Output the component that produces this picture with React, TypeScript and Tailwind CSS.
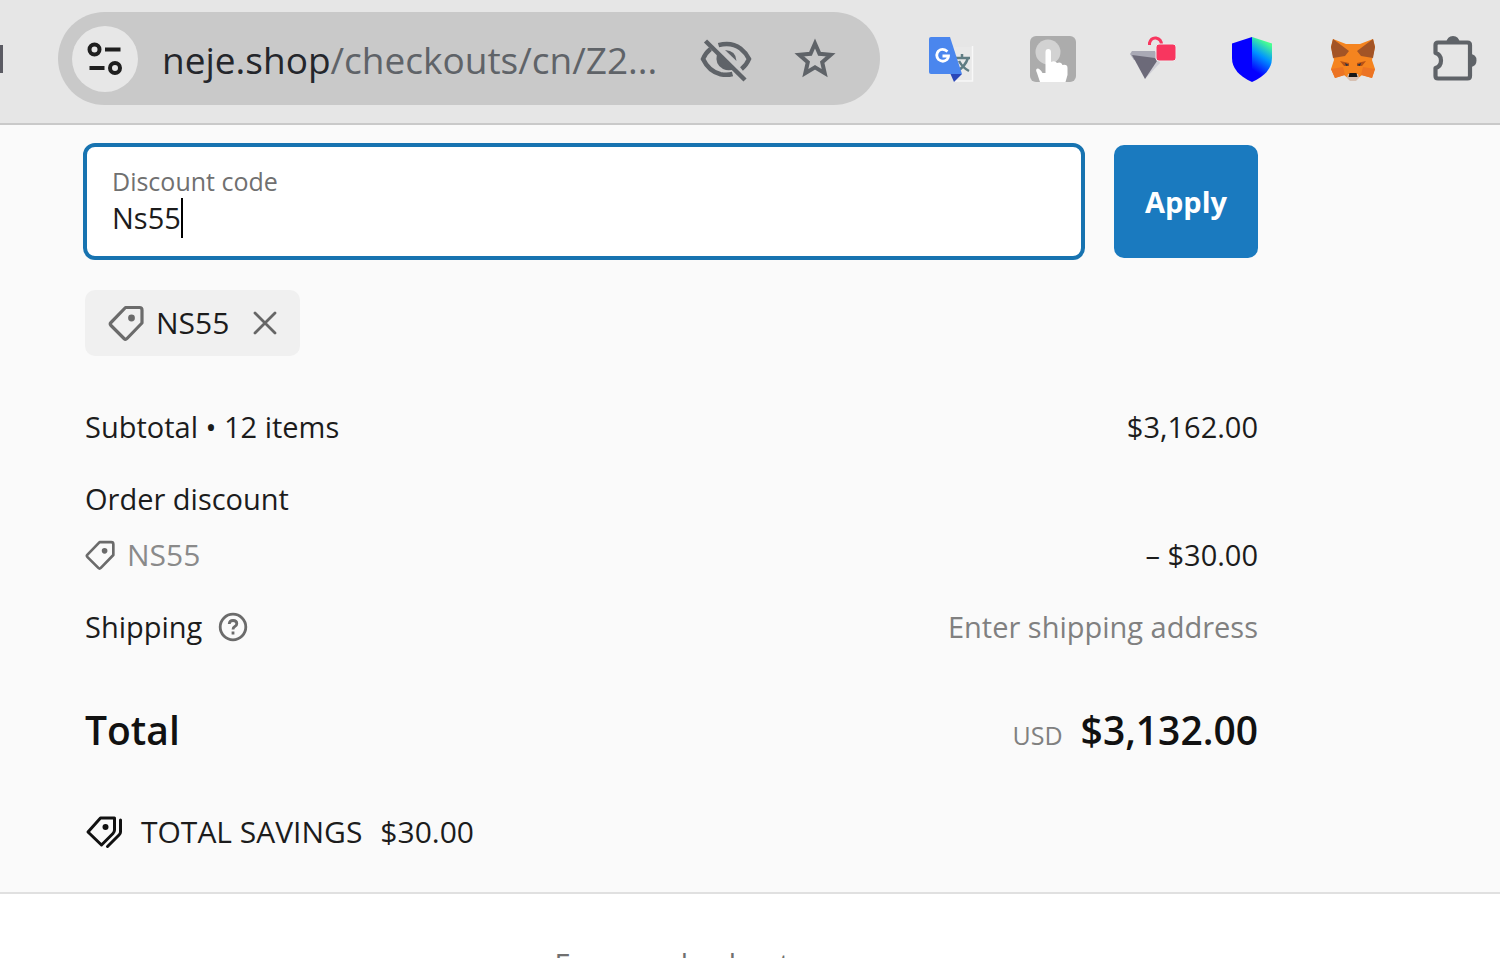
import type { ReactNode } from 'react'

function TagIcon({ className }: { className: string }) {
  return (
    <svg viewBox="0 0 36 36" fill="none" stroke="#6b6b6b" strokeWidth="3.2" strokeLinejoin="round" className={className} aria-hidden="true">
      <path d="M17.5 2.5 H31.5 Q34 2.5 34 5 V18 L19 33.5 Q17.5 35 16 33.5 L3 20.5 Q1.5 19 3 17.5 Z" />
      <circle cx="23.5" cy="13" r="3.4" fill="#6b6b6b" stroke="none" />
    </svg>
  )
}

function SavingsIcon() {
  return (
    <svg viewBox="0 0 38 34" fill="none" stroke="#111" strokeWidth="3" strokeLinejoin="round" strokeLinecap="round" className="w-[38px] h-[34px] shrink-0" aria-hidden="true">
      <path d="M15.5 3 H29.5 V15 Q29.5 17 28 18.5 L16.5 30 L3 17 Z" />
      <circle cx="20.5" cy="12" r="3" fill="#111" stroke="none" />
      <path d="M35.5 5 V17 Q35.5 18.5 34 20 L22.5 31.5" />
    </svg>
  )
}

function TuneIcon() {
  return (
    <svg viewBox="0 0 36 34" fill="none" stroke="#1f1f1f" strokeWidth="4" className="w-9 h-[34px]" aria-hidden="true">
      <circle cx="7.5" cy="7.5" r="5" />
      <path d="M18 7.5 H33.5 M2.5 26 H17.5" />
      <circle cx="28" cy="26" r="5" />
    </svg>
  )
}

function EyeOffIcon() {
  return (
    <svg viewBox="0 0 52 44" fill="none" stroke="#5f6368" strokeWidth="4.5" className="w-[52px] h-[44px]" aria-hidden="true">
      <path d="M18.5 6.2 Q31 2.5 40.5 9.5 Q46 13.8 49 20 Q46.5 26 41.5 30" />
      <path d="M10.5 10 Q5.5 14 3 20 Q9 32.5 20.5 35.2 Q27 36.5 32.5 35" />
      <path d="M17 15 L34 30 Q29 32.5 23 30 Q14.5 25.5 17 15 Z" fill="#5f6368" stroke="none" />
      <path d="M25 11 Q36 11.5 36.5 22 L25 11 Z" fill="#5f6368" stroke="none" />
      <path d="M5.5 2 L45 41" />
    </svg>
  )
}

function StarIcon() {
  return (
    <svg viewBox="0 0 44 42" fill="none" stroke="#5f6368" strokeWidth="4" strokeLinejoin="miter" className="w-[44px] h-[42px]" aria-hidden="true">
      <path d="M22 5.5 L26.5 15.8 L37.7 16.8 L29.2 24.2 L31.7 35.2 L22 29.4 L12.3 35.2 L14.8 24.2 L6.3 16.8 L17.5 15.8 Z" />
    </svg>
  )
}

function TranslateIcon() {
  return (
    <svg viewBox="3 0 48 48" className="size-12" aria-hidden="true">
      <path d="M23 11 H45 Q46.5 11 46.5 12.5 V45 H28 Z" fill="#e9e9e9" />
      <path d="M46.5 10 V45 H28" fill="none" stroke="#f8f8f8" strokeWidth="1.5" />
      <path d="M28 22 H44 M36 18 V22 M42 22 Q39 31 31 35 M33 25 Q37 32 43 35" fill="none" stroke="#607d83" strokeWidth="2.5" />
      <path d="M24.5 38 H36 L28 46 Z" fill="#2a47b8" />
      <path d="M5 1 H24 L36 38 H5 Q3 38 3 36 V3 Q3 1 5 1 Z" fill="#4a86ee" />
      <path d="M21.5 15.5 Q16.5 11.5 12.5 15 Q9 19 12.5 23.5 Q17 27 21 23.5 Q22.5 22 22.5 20 H16.5" fill="none" stroke="#fff" strokeWidth="2.8" />
    </svg>
  )
}

function PointerIcon() {
  return (
    <svg viewBox="0 0 48 48" className="size-12" aria-hidden="true">
      <rect x="1" y="0" width="46" height="46" rx="6" fill="#acacac" />
      <circle cx="19" cy="16" r="12.5" fill="#d2d2d2" />
      <path d="M16.5 16 Q16.5 13 19.2 13 Q22 13 22 16 V26 Q26 24 28 27 Q32 25.5 33.5 29 Q38.5 28 38.5 32 V39 L36.5 46 H11 L8 37 Q6 33 8.5 32.5 Q11 32.5 13.5 37 L16.5 37 Z" fill="#fff" />
    </svg>
  )
}

function LockPrismIcon() {
  return (
    <svg viewBox="0 0 48 48" className="size-12" aria-hidden="true">
      <path d="M25 15 L31 27 L16 43 Z" fill="#cfcfd6" />
      <path d="M3 15 H26 L29 20 L26 24 H5 L1 18 Z" fill="#a9a9b5" />
      <path d="M3 19 L26 22 L28 25 L16 43 Z" fill="#6c6a79" />
      <path d="M20.5 9 V7 Q22 1.5 27 2 Q32.5 3 32.5 9" fill="none" stroke="#f8365f" strokeWidth="3" />
      <rect x="27" y="8" width="20" height="17" rx="3" fill="#f8365f" stroke="#ececec" strokeWidth="1" />
    </svg>
  )
}

function ShieldIcon() {
  return (
    <svg viewBox="1 0 48 48" className="size-12" aria-hidden="true">
      <defs>
        <linearGradient id="shield" x1="0.7" y1="0" x2="0.4" y2="1">
          <stop offset="0.1" stopColor="#48ff91" />
          <stop offset="0.45" stopColor="#0094ff" />
          <stop offset="0.85" stopColor="#0500ff" />
        </linearGradient>
      </defs>
      <path d="M24 1 L4 7.5 V22 Q4 37 24 46 Z" fill="#0500ff" />
      <path d="M24 1 L44 7.5 V22 Q44 37 24 46 Z" fill="url(#shield)" />
    </svg>
  )
}

function FoxIcon() {
  return (
    <svg viewBox="0 0 48 48" className="size-12" aria-hidden="true">
      <path d="M4 3 L17 8 H31 L44 3 L46 11 L43 24 L46 33 L43 42 L33 39 L28 43 H20 L15 39 L6 42 L2 33 L5 24 L2 11 Z" fill="#f5841f" />
      <path d="M4 3 L20 15 L16 20 L4 22 L2 11 Z M44 3 L28 15 L32 20 L44 22 L46 11 Z" fill="#a35426" />
      <path d="M2 33 L14 31 L16 39 L6 42 Z M46 33 L34 31 L32 39 L43 42 Z" fill="#ec7424" />
      <path d="M11 25 L20 27 V30 L15 30 Z M37 25 L28 27 V30 L33 30 Z" fill="#b65116" />
      <path d="M16 27 L20 29 L17 30 Z M32 27 L28 29 L31 30 Z" fill="#233447" />
      <path d="M19 38 H29 L30 42 L27 45 H21 L18 42 Z" fill="#d7c1b3" />
      <path d="M20.5 37 H27.5 L28.5 41 H19.5 Z" fill="#161616" />
    </svg>
  )
}

function PuzzleIcon() {
  return (
    <svg viewBox="-2 1 48 48" className="size-12" aria-hidden="true">
      <path d="M7 7.5 H36.5 Q39 7.5 39 10 V41 Q39 43.5 36.5 43.5 H7 Q4.5 43.5 4.5 41 V33 Q10 31.5 10 25.5 Q10 19.5 4.5 18 V10 Q4.5 7.5 7 7.5 Z" fill="none" stroke="#5f6368" strokeWidth="4.2" strokeLinejoin="round" />
      <path d="M15.5 7.5 Q16 1 22 1 Q28 1 28.5 7.5 Z M39 19 Q45.5 19 45.5 25.5 Q45.5 32 39 32 Z" fill="#5f6368" />
    </svg>
  )
}

const extensions = [
  { label: 'Translate', icon: <TranslateIcon /> },
  { label: 'Clicker', icon: <PointerIcon /> },
  { label: 'Unlocker', icon: <LockPrismIcon /> },
  { label: 'Wallet', icon: <ShieldIcon /> },
  { label: 'Fox wallet', icon: <FoxIcon /> },
  { label: 'Extensions', icon: <PuzzleIcon /> },
]

function BrowserBar() {
  return (
    <header className="flex items-center h-[125px] pb-1.5 pr-[23px] bg-[#e6e6e6] border-b-2 border-[#c9c9c9]">
      <span className="w-[3px] h-7 bg-[#5b5b63]" />
      <div className="flex-1 min-w-0 flex items-center h-[93px] ml-[55px] mr-[49px] pl-[14px] pr-[43px] rounded-full bg-[#c9c9c9]">
        <button type="button" aria-label="Site information" className="flex items-center justify-center size-[66px] shrink-0 rounded-full bg-[#e7e7e7]">
          <TuneIcon />
        </button>
        <span className="flex-1 min-w-0 ml-6 pt-0.5 whitespace-nowrap text-[37px] text-[#5f6368]">
          <span className="text-[#24262b]">neje.shop</span>/checkouts/cn/Z2...
        </span>
        <button type="button" aria-label="Tracking protection" className="pt-1 shrink-0">
          <EyeOffIcon />
        </button>
        <button type="button" aria-label="Bookmark this page" className="ml-[41px] shrink-0">
          <StarIcon />
        </button>
      </div>
      <div className="flex gap-[52px] pt-0.5 shrink-0">
        {extensions.map((extension) => (
          <button key={extension.label} type="button" aria-label={extension.label}>
            {extension.icon}
          </button>
        ))}
      </div>
    </header>
  )
}

function SummaryRow({ label, children }: { label: ReactNode; children?: ReactNode }) {
  return (
    <div className="flex items-center justify-between h-10">
      <dt className="flex items-center">{label}</dt>
      {children && <dd>{children}</dd>}
    </div>
  )
}

export default function App() {
  return (
    <div className="h-screen overflow-hidden bg-white font-['Open_Sans','Noto_Sans',sans-serif] text-[29px] leading-10 text-[#1c1c1c]">
      <BrowserBar />

      <main>
        <section className="pl-[85px] pr-[242px] pt-[18px] pb-10 bg-[#fafafa] border-b-2 border-[#e0e0e0]">
          <form className="flex items-center gap-[29px] -ml-0.5" onSubmit={(e) => e.preventDefault()}>
            <div className="flex-1 h-[117px] pt-4 px-[25px] rounded-xl border-4 border-[#1773b0] bg-white">
              <label htmlFor="discount" className="block h-[35px] leading-9 text-[25px] text-[#707070]">
                Discount code
              </label>
              <div className="flex items-center h-10">
                <input
                  id="discount"
                  type="text"
                  defaultValue="Ns55"
                  className="field-sizing-content h-10 outline-none caret-transparent"
                />
                <span className="w-0.5 h-10 bg-black" />
              </div>
            </div>
            <button type="submit" className="w-36 h-[113px] rounded-[10px] bg-[#1a7abf] font-bold text-white">
              Apply
            </button>
          </form>

          {/* Applied code */}
          <div className="inline-flex items-center h-[66px] mt-[30px] px-[23px] rounded-[10px] bg-[#f0f0f0]">
            <TagIcon className="size-9" />
            <span className="ml-3 text-[30px]">NS55</span>
            <button type="button" aria-label="Remove NS55" className="ml-6">
              <svg viewBox="0 0 24 24" fill="none" stroke="#666" strokeWidth="2.8" strokeLinecap="round" className="size-6">
                <path d="M2 2 L22 22 M22 2 L2 22" />
              </svg>
            </button>
          </div>

          <dl className="mt-[51px]">
            <SummaryRow label="Subtotal • 12 items">$3,162.00</SummaryRow>
            <div className="mt-8">
              <SummaryRow label="Order discount" />
            </div>
            <div className="mt-4">
              <SummaryRow
                label={
                  <>
                    <TagIcon className="size-[30px]" />
                    <span className="ml-3 text-[30px] text-[#8a8a8a]">NS55</span>
                  </>
                }
              >
                – $30.00
              </SummaryRow>
            </div>
            <div className="mt-8">
              <SummaryRow
                label={
                  <>
                    Shipping
                    <button type="button" aria-label="Shipping policy" className="ml-4">
                      <svg viewBox="0 0 30 30" fill="none" stroke="#6b6b6b" strokeWidth="2.8" className="size-[30px]">
                        <circle cx="15" cy="15" r="12.8" />
                        <path d="M11.2 12 Q11.5 8.5 15 8.5 Q18.8 8.5 18.8 11.7 Q18.8 13.5 16.8 14.5 Q15 15.5 15 17.5" />
                        <path d="M15 19.5 V22.5" />
                      </svg>
                    </button>
                  </>
                }
              >
                <span className="text-[#808080]">Enter shipping address</span>
              </SummaryRow>
            </div>
            <div className="flex items-baseline justify-between mt-[55px] text-[39px] leading-[56px] font-semibold text-[#111]">
              <dt>Total</dt>
              <dd>
                <span className="mr-[18px] text-[25px] font-normal text-[#808080]">USD</span>
                $3,132.00
              </dd>
            </div>
          </dl>

          <p className="flex items-center mt-[49px] text-[30px] font-medium">
            <SavingsIcon />
            <span className="ml-[18px]">TOTAL SAVINGS</span>
            <span className="ml-[18px]">$30.00</span>
          </p>
        </section>

        <h2 className="pt-[50px] pr-[156px] text-center text-[#707070]">Express checkout</h2>
      </main>
    </div>
  )
}
